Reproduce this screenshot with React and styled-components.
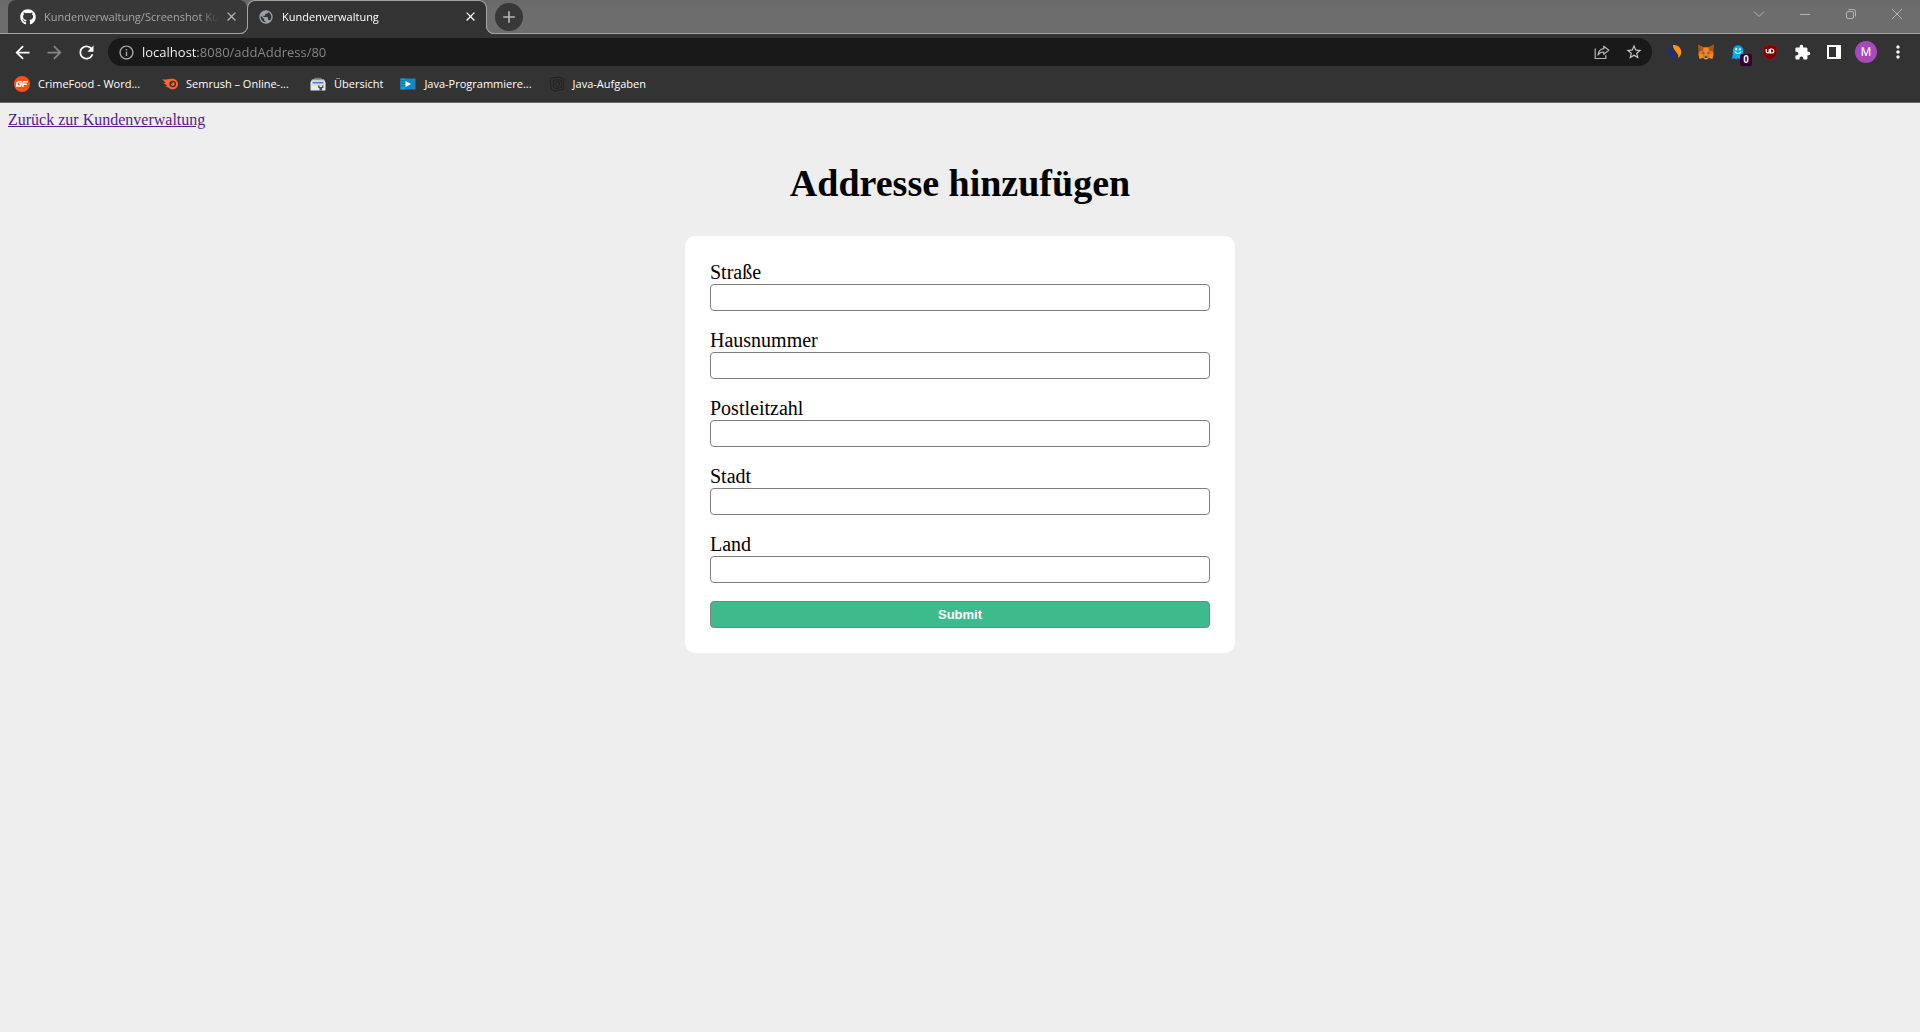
import React from "react";
import styled, { createGlobalStyle } from "styled-components";
import { FaGithub } from "react-icons/fa";
import {
  MdAdd,
  MdArrowBack,
  MdArrowForward,
  MdClose,
  MdExtension,
  MdInfoOutline,
  MdMoreVert,
  MdPublic,
  MdRefresh,
  MdStarBorder,
} from "react-icons/md";

const ui = `"Open Sans", "Noto Sans", sans-serif`;
const serif = `"Liberation Serif", "Times New Roman", serif`;
const frame = "#6d6d6d";
const chrome = "#333333";
const outline = "#a2a2a2";

const GlobalStyle = createGlobalStyle`
  *, *::before, *::after { box-sizing: border-box; }
  body { margin: 0; background: #eeeeee; }
`;

const Window = styled.div`
  min-height: 100vh;
  display: flex;
  flex-direction: column;
  background: #eeeeee;
`;

/* ---------- browser frame ---------- */

const TabStrip = styled.div`
  display: flex;
  height: 34px;
  padding-left: 8px;
  background: linear-gradient(#686868, ${frame} 8px);
  border-bottom: 1px solid ${outline};
  font: 11px/16px ${ui};
`;

const Tab = styled.div`
  position: relative;
  display: flex;
  align-items: center;
  width: ${(p) => (p.$active ? 240 : 239)}px;
  height: ${(p) => (p.$active ? 34 : 33)}px;
  padding: 0 8px ${(p) => (p.$active ? 2 : 0)}px ${(p) => (p.$active ? 10 : 12)}px;
  border-radius: 8px 8px 0 0;
  background: ${(p) => (p.$active ? chrome : "#383838")};
  color: ${(p) => (p.$active ? "#ffffff" : "#a6a6a6")};
  border: ${(p) => (p.$active ? `1px solid ${outline}` : "0")};
  border-bottom: 0;

  &::before,
  &::after {
    content: "";
    display: ${(p) => (p.$active ? "block" : "none")};
    position: absolute;
    bottom: 0;
    width: 8px;
    height: 8px;
    border-bottom: 1px solid ${outline};
  }
  &::before {
    left: -8px;
    border-right: 1px solid ${outline};
    border-bottom-right-radius: 8px;
    box-shadow: 2px 2px 0 ${chrome};
  }
  &::after {
    right: -8px;
    border-left: 1px solid ${outline};
    border-bottom-left-radius: 8px;
    box-shadow: -2px 2px 0 ${chrome};
  }
`;

const TabTitle = styled.span`
  flex: 1;
  min-width: 0;
  margin: 0 4px 0 8px;
  overflow: hidden;
  white-space: nowrap;
  mask-image: linear-gradient(to left, transparent, #000 20px);
`;

const IconButton = styled.button`
  display: flex;
  align-items: center;
  justify-content: center;
  flex: none;
  width: ${(p) => p.$w || 32}px;
  height: ${(p) => p.$h || 28}px;
  padding: 0;
  border: 0;
  background: none;
  color: ${(p) => p.$color || "#ffffff"};
`;

const NewTab = styled(IconButton)`
  border-radius: 50%;
  background: #383838;
`;

const StripActions = styled.div`
  display: flex;
  flex: 1;
`;

const NewTabWrap = styled.div`
  flex: 1;
  padding: 3px 0 0 8px;
`;

const Toolbar = styled.div`
  display: flex;
  align-items: center;
  gap: 6px;
  height: 36px;
  padding: 0 6px;
  background: ${chrome};
`;

const Group = styled.div`
  display: flex;
  align-items: center;
`;

const Omnibox = styled.div`
  display: flex;
  align-items: center;
  flex: 1;
  height: 28px;
  padding: 0 2px 0 10px;
  border-radius: 14px;
  background: #191919;
  color: #a4a7ab;
`;

const UrlField = styled.input`
  flex: 1;
  min-width: 0;
  height: 28px;
  margin-left: 7px;
  padding: 0;
  border: 0;
  outline: 0;
  font: 13px/28px ${ui};
  color: transparent;
  background: linear-gradient(to right, #ffffff 56px, #8a8a8a 56px);
  background-clip: text;
`;

const Badge = styled.span`
  position: absolute;
  right: 2px;
  bottom: 0;
  width: 12px;
  height: 12px;
  border-radius: 2px;
  background: #330033;
  color: #ffffff;
  font: bold 10px/12px "Liberation Sans", Arial, sans-serif;
  text-align: center;
`;

const BadgedButton = styled(IconButton)`
  position: relative;
`;

const Avatar = styled.span`
  width: 22px;
  height: 22px;
  border-radius: 50%;
  background: #ab47bc;
  color: #ffffff;
  font: 12px/22px Roboto, sans-serif;
  text-align: center;
`;

const Bookmarks = styled.nav`
  display: flex;
  gap: 17px;
  height: 33px;
  padding: 0 14px 4px;
  background: ${chrome};
  border-bottom: 1px solid #686868;
`;

const Bookmark = styled.a`
  display: flex;
  align-items: center;
  gap: 8px;
  color: #ffffff;
  font: 11px/16px ${ui};
  white-space: nowrap;
  text-decoration: none;
`;

const BookmarkName = styled.span`
  min-width: ${(p) => (p.$long ? "107px" : "0")};
`;

/* ---------- page ---------- */

const Page = styled.main`
  flex: 1;
  display: flex;
  flex-direction: column;
  align-items: center;
  padding: 8px;
  color: #000000;
  font: 16px/18px ${serif};
`;

const BackLink = styled.a`
  align-self: flex-start;
  color: #551a8b;
  text-decoration: underline;
`;

const Title = styled.h1`
  margin: 32px 0 31px;
  font: bold 38px/44px ${serif};
`;

const Card = styled.form`
  display: flex;
  flex-direction: column;
  gap: 18px;
  width: 100%;
  max-width: 550px;
  padding: 25px;
  border-radius: 10px;
  background: #ffffff;
`;

const Field = styled.div`
  display: flex;
  flex-direction: column;
`;

const Label = styled.label`
  font: 20px/23px ${serif};
`;

const Input = styled.input`
  height: 27px;
  padding: 0 6px;
  border: 1px solid #808080;
  border-radius: 4px;
  background: #ffffff;
  font: 13px/16px "Liberation Sans", Arial, sans-serif;
`;

const Submit = styled.button`
  height: 27px;
  padding: 0;
  border: 1px solid #808080;
  border-radius: 4px;
  background: #3dbb8d;
  color: #ffffff;
  font: bold 13px/16px "Liberation Sans", Arial, sans-serif;
`;

/* ---------- drawings ---------- */

const Svg = ({ size = 16, children, ...rest }) => (
  <svg width={size} height={size} viewBox="0 0 16 16" fill="none" aria-hidden="true" {...rest}>
    {children}
  </svg>
);

const ChevronIcon = () => (
  <Svg><path d="M3 5.5l5 5 5-5" stroke="#b4b4b4" /></Svg>
);
const MinimizeIcon = () => (
  <Svg><path d="M3 8.5h10" stroke="#b4b4b4" /></Svg>
);
const RestoreIcon = () => (
  <Svg stroke="#b4b4b4">
    <rect x="3.5" y="5.5" width="7" height="7" rx="1.5" />
    <path d="M5.5 3.5h5a2 2 0 0 1 2 2v5" />
  </Svg>
);
const CloseWindowIcon = () => (
  <Svg><path d="M3 3l10 10M13 3L3 13" stroke="#b4b4b4" /></Svg>
);
const ShareIcon = () => (
  <Svg stroke="#b4b7ba" strokeWidth="1.2">
    <path d="M1.200 4.500v10h10.600V11" />
    <path d="M9.800 2.200l5 4.100-5 4.100V8C7 8 5.200 9 4 11c.3-3.400 2.200-5.900 5.800-6.400z" strokeLinejoin="round" />
  </Svg>
);
const SwirlIcon = () => (
  <Svg>
    <path d="M6.500 1.800C3 2.300.8 5 .8 8.300c0 3.600 2.800 6.200 6.200 6.200 2.700 0 4.800-1.400 5-3.300.2-3.500-5.500-3.400-5.500-9.400z" fill="#252f66" />
    <path d="M6.800 1.200C11.500.6 15.200 3.600 15.200 8c0 2.800-1.200 4.800-3.200 5.900C14 9.200 7 7 6.800 1.200z" fill="#ff9409" />
  </Svg>
);
const FoxIcon = () => (
  <Svg>
    <path d="M.3.8l5.500 2.700h4.400L15.700.8l-.5 6.400.5 3.300-1.300 4.200-3.400-.8-1.700 1.400H6.700L5 13.900l-3.400.8L.3 10.500l.5-3.300z" fill="#e2761b" />
    <path d="M.3.8l5 3.200-1 2.800-3.500.4zM15.700.8l-5 3.200 1 2.800 3.500.4z" fill="#a65220" />
    <path d="M5.800 3.500h4.400L9.500 11h-3z" fill="#f08a2c" />
    <path d="M.8 9.800l3.800.4.6 3.500-3.600 1zM15.200 9.800l-3.800.4-.6 3.500 3.600 1z" fill="#f6851b" />
    <path d="M4 8.200l2.600.5-.4 1.200zM12 8.200l-2.600.5.4 1.200z" fill="#233447" />
    <path d="M6.600 12.500h2.800l.5 1.600-1 1.200H7.100l-1-1.200z" fill="#c0ad9e" />
    <path d="M6.800 12.500h2.400l.3 1.300h-3z" fill="#161616" />
  </Svg>
);
const GhostIcon = () => (
  <Svg>
    <path d="M2.800 6.400a5.200 5.200 0 0 1 10.400 0V15l-1.800-1-1.700 1.400L8 14l-1.800 1.400-1.700-1.100-3 .5C2.500 13.500 2.800 11 2.800 9z" fill="#00aef0" />
    <ellipse cx="6.200" cy="5.200" rx="1" ry="1.300" fill="#fff" />
    <ellipse cx="9.900" cy="5.200" rx="1" ry="1.300" fill="#fff" />
    <path d="M4.800 7.500c1.200 2.600 5.200 2.600 6.400 0" stroke="#fff" strokeWidth="1.100" />
  </Svg>
);
const ShieldIcon = () => (
  <Svg>
    <path d="M8 .2c2 1.500 4 2 6.800 2v5.500c0 4-2.600 6.300-6.800 8.200-4.200-1.900-6.800-4.200-6.800-8.200V2.200C4 2.200 6 1.700 8 .2z" fill="#800000" stroke="#9c2222" strokeWidth=".5" />
    <path d="M4.200 5v2.400a1.500 1.500 0 0 0 3 0V5M7.200 9h2.600a2 2 0 0 0 0-4H8.500v3.500" stroke="#fff" strokeWidth="1.200" />
  </Svg>
);
const SidePanelIcon = () => (
  <Svg>
    <path d="M1 1h14v14H1zM3 3v10h7V3z" fill="#fff" fillRule="evenodd" />
  </Svg>
);
const OrangeBadgeIcon = () => (
  <Svg>
    <circle cx="8" cy="8" r="8" fill="#ff4f17" />
    <path d="M7.800 5.800H4.200L3 7.200 2.700 10h3.900l.5-2.200H5.300M8.600 10.800l.9-5h4.300M9.200 8.300h3.600" stroke="#fff" strokeWidth="1.600" />
  </Svg>
);
const CometIcon = () => (
  <Svg>
    <path d="M0 3.200c2.800.4 5 .4 7.300-.1 5-1.200 8.700 1.200 8.700 5a5.400 5.400 0 0 1-9.300 3.700C5.500 11 4.300 10.700 3 10.400c.8-.3 1.600-.3 2.300-.2C4.400 8.500 2.600 7.500 1 7.200c.9-.3 1.600-.3 2.500-.1C2.700 5.500 1.300 4.300 0 3.200z" fill="#ff642d" />
    <circle cx="10.700" cy="8" r="3.300" fill={chrome} />
    <circle cx="10.700" cy="8" r="1.900" fill="#ff642d" />
    <path d="M9 8.200a1.700 1.700 0 0 1 1.700-1.700" stroke={chrome} />
  </Svg>
);
const BoxIcon = () => (
  <Svg>
    <path d="M5 4V2.500h6V4" stroke="#70757a" strokeWidth="1.300" />
    <path d="M2 3.500h12l1.500 3v8H.5v-8z" fill="#e9eaec" />
    <path d="M2 4h12v1.500H2z" fill="#c9ccd0" />
    <path d="M2.500 6h11v1.500h-11z" fill="#3f78e0" />
    <path d="M1.500 8.500h13v1h-13z" fill="#b9cdf3" />
    <path d="M8 9.500v2l1.500 1v2h2.500v-2l1.500-1v-2H12v1.500H9.500V9.500z" fill="#4c4f55" />
  </Svg>
);
const VideoIcon = () => (
  <Svg>
    <path d="M.5 2.500h15v11H.5z" fill="#1687c4" />
    <path d="M.5 2.500H5v11H.5z" fill="#1a9bd0" />
    <path d="M1 5h4M1 7.500h4M1 10h4" stroke="#0b6fa8" />
    <path d="M5.500 5v6l5.500-3z" fill="#fff" />
  </Svg>
);
const StackIcon = () => (
  <Svg stroke="#222222">
    <path d="M1.200 2l10-1 .8 1.200 2.800.6-.4 10.400L5 15.200 2 12.500z" />
    <path d="M4.500 4h8v7.500L6.500 12.500l-2-1.700z" />
    <path d="M7 6h3.500v3.500L8 10.500 7 9.500z" />
  </Svg>
);

const bookmarks = [
  ["CrimeFood - Word...", <OrangeBadgeIcon />],
  ["Semrush – Online-...", <CometIcon />],
  ["Übersicht", <BoxIcon />],
  ["Java-Programmiere...", <VideoIcon />],
  ["Java-Aufgaben", <StackIcon />],
];

const fields = [
  ["strasse", "Straße"],
  ["hausnummer", "Hausnummer"],
  ["postleitzahl", "Postleitzahl"],
  ["stadt", "Stadt"],
  ["land", "Land"],
];

export default function App() {
  return (
    <Window>
      <GlobalStyle />
      <header>
        <TabStrip>
          <Tab>
            <FaGithub size={16} color="#ffffff" />
            <TabTitle>Kundenverwaltung/Screenshot Ku</TabTitle>
            <IconButton $w={16} $h={16} $color="#b4b4b4" aria-label="Tab schließen"><MdClose size={15} /></IconButton>
          </Tab>
          <Tab $active>
            <MdPublic size={16} color="#9aa0a6" />
            <TabTitle>Kundenverwaltung</TabTitle>
            <IconButton $w={16} $h={16} aria-label="Tab schließen"><MdClose size={15} /></IconButton>
          </Tab>
          <StripActions>
            <NewTabWrap>
              <NewTab $w={28} $color="#b4b4b4" aria-label="Neuer Tab"><MdAdd size={20} /></NewTab>
            </NewTabWrap>
            <IconButton $w={46} aria-label="Tabs suchen"><ChevronIcon /></IconButton>
            <IconButton $w={46} aria-label="Minimieren"><MinimizeIcon /></IconButton>
            <IconButton $w={46} aria-label="Wiederherstellen"><RestoreIcon /></IconButton>
            <IconButton $w={46} aria-label="Schließen"><CloseWindowIcon /></IconButton>
          </StripActions>
        </TabStrip>
        <Toolbar>
          <Group>
            <IconButton aria-label="Zurück"><MdArrowBack size={21} /></IconButton>
            <IconButton $color="#858585" aria-label="Vorwärts"><MdArrowForward size={21} /></IconButton>
            <IconButton aria-label="Neu laden"><MdRefresh size={21} /></IconButton>
          </Group>
          <Omnibox>
            <MdInfoOutline size={17} />
            <UrlField aria-label="Adresse" defaultValue="localhost:8080/addAddress/80" spellCheck={false} />
            <IconButton aria-label="Teilen"><ShareIcon /></IconButton>
            <IconButton $color="#c4c7ca" aria-label="Lesezeichen"><MdStarBorder size={18} /></IconButton>
          </Omnibox>
          <Group>
            <IconButton aria-label="Swirl"><SwirlIcon /></IconButton>
            <IconButton aria-label="Fuchs"><FoxIcon /></IconButton>
            <BadgedButton aria-label="Geist"><GhostIcon /><Badge>0</Badge></BadgedButton>
            <IconButton aria-label="Schild"><ShieldIcon /></IconButton>
            <IconButton aria-label="Erweiterungen"><MdExtension size={17} /></IconButton>
            <IconButton aria-label="Seitenleiste"><SidePanelIcon /></IconButton>
            <IconButton aria-label="Profil"><Avatar>M</Avatar></IconButton>
            <IconButton aria-label="Menü"><MdMoreVert size={20} /></IconButton>
          </Group>
        </Toolbar>
        <Bookmarks>
          {bookmarks.map(([name, icon]) => (
            <Bookmark key={name} href="#">
              {icon}
              <BookmarkName $long={name.endsWith("...")}>{name}</BookmarkName>
            </Bookmark>
          ))}
        </Bookmarks>
      </header>
      <Page>
        <BackLink href="#">Zurück zur Kundenverwaltung</BackLink>
        <Title>Addresse hinzufügen</Title>
        <Card onSubmit={(e) => e.preventDefault()}>
          {fields.map(([id, label]) => (
            <Field key={id}>
              <Label htmlFor={id}>{label}</Label>
              <Input id={id} name={id} type="text" />
            </Field>
          ))}
          <Submit type="submit">Submit</Submit>
        </Card>
      </Page>
    </Window>
  );
}
